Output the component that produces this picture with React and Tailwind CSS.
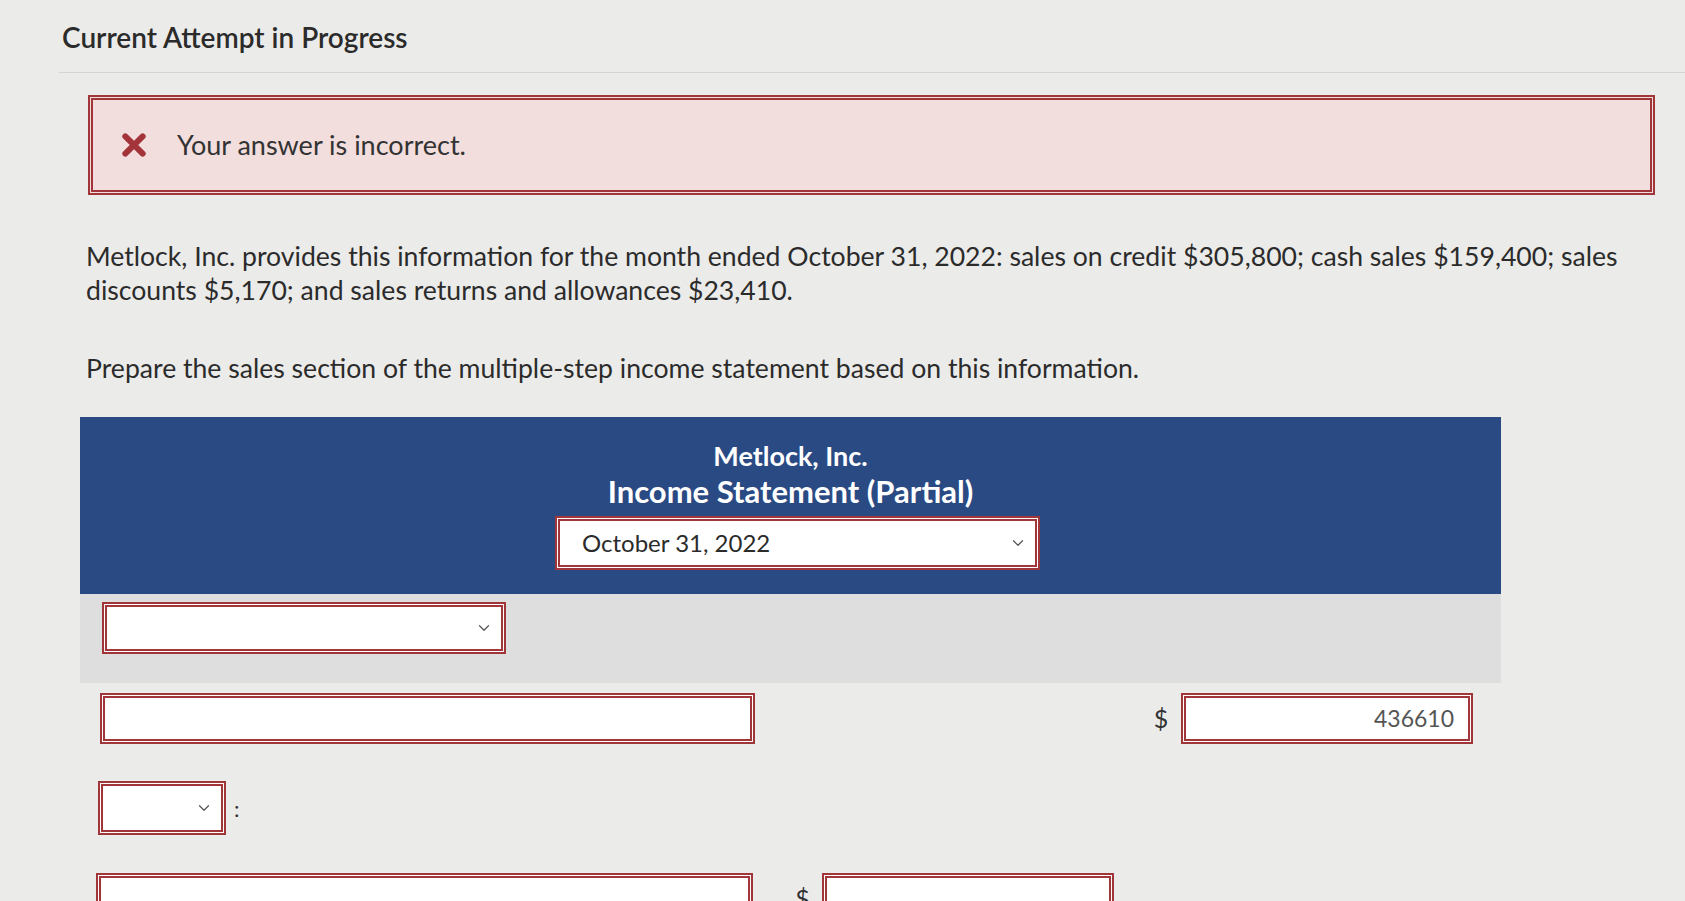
import { ChevronDown } from "lucide-react";

const boxBorder = "border-[5px] border-double border-[#a0363a]";

const SelectBox = ({ value = "", className = "" }) => (
  <div
    className={`flex items-center justify-between bg-white ${boxBorder} ${className}`}
  >
    <span className="pl-[22px] text-[24px] text-[#2b2b2b]">{value}</span>
    <ChevronDown className="mr-[8px] h-[18px] w-[18px] text-[#555]" strokeWidth={1.6} />
  </div>
);

const InputBox = ({ value = "", className = "" }) => (
  <div
    className={`flex items-center justify-end bg-white pr-[14px] text-[23px] text-[#555] ${boxBorder} ${className}`}
  >
    {value}
  </div>
);

const App = () => {
  return (
    <div className="min-h-screen w-full overflow-hidden bg-[#ebebea] font-['Lato',sans-serif] text-[#2b2b2b]">
      <div className="pt-[20px]">
        <h1 className="ml-[62px] text-[28px] font-semibold leading-[34px]">
          Current Attempt in Progress
        </h1>
        <div className="ml-[59px] mt-[18px] h-px bg-[#d2d5d5]" />

        {/* Feedback */}
        <div
          className={`ml-[88px] mr-[30px] mt-[22px] flex h-[100px] items-center bg-[#f2dedd] ${boxBorder}`}
        >
          <svg className="ml-[28px] h-[26px] w-[26px]" viewBox="0 0 24 24">
            <path
              d="M4 4 L20 20 M20 4 L4 20"
              stroke="#a3343a"
              strokeWidth="5.5"
              strokeLinecap="round"
            />
          </svg>
          <span className="ml-[30px] text-[27px] text-[#333]">
            Your answer is incorrect.
          </span>
        </div>

        {/* Question */}
        <p className="ml-[86px] mt-[44px] w-[1560px] text-[26.6px] leading-[34px]">
          Metlock, Inc. provides this information for the month ended October
          31, 2022: sales on credit $305,800; cash sales $159,400; sales
          discounts $5,170; and sales returns and allowances $23,410.
        </p>
        <p className="ml-[86px] mt-[44px] text-[26.6px] leading-[34px]">
          Prepare the sales section of the multiple-step income statement based
          on this information.
        </p>

        {/* Statement */}
        <div className="ml-[80px] mt-[32px] w-[1421px]">
          <div className="bg-[#2a4a84] pb-[24px] pt-[22px] text-center text-white">
            <div className="text-[27px] font-bold leading-[34px]">
              Metlock, Inc.
            </div>
            <div className="text-[31px] font-bold leading-[36px]">
              Income Statement (Partial)
            </div>
            <SelectBox
              value="October 31, 2022"
              className="ml-[475px] mt-[7px] h-[54px] w-[485px] text-left"
            />
          </div>

          <div className="h-[89px] bg-[#dedede] pl-[22px] pt-[8px]">
            <SelectBox className="h-[52px] w-[404px]" />
          </div>

          <div className="mt-[10px] flex items-center pl-[20px]">
            <InputBox className="h-[51px] w-[655px]" />
            <div className="ml-[386px] w-[40px] text-center text-[25px] text-[#333]">
              $
            </div>
            <InputBox value="436610" className="h-[51px] w-[292px]" />
          </div>

          <div className="mt-[37px] flex items-center pl-[18px]">
            <SelectBox className="h-[54px] w-[128px]" />
            <span className="ml-[8px] text-[22px] text-[#333]">:</span>
          </div>

          <div className="mt-[38px] flex items-center pl-[16px]">
            <InputBox className="h-[51px] w-[657px]" />
            <div className="ml-[30px] w-[39px] text-center text-[25px] text-[#333]">
              $
            </div>
            <InputBox className="h-[51px] w-[292px]" />
          </div>
        </div>
      </div>
    </div>
  );
};

export default App;
